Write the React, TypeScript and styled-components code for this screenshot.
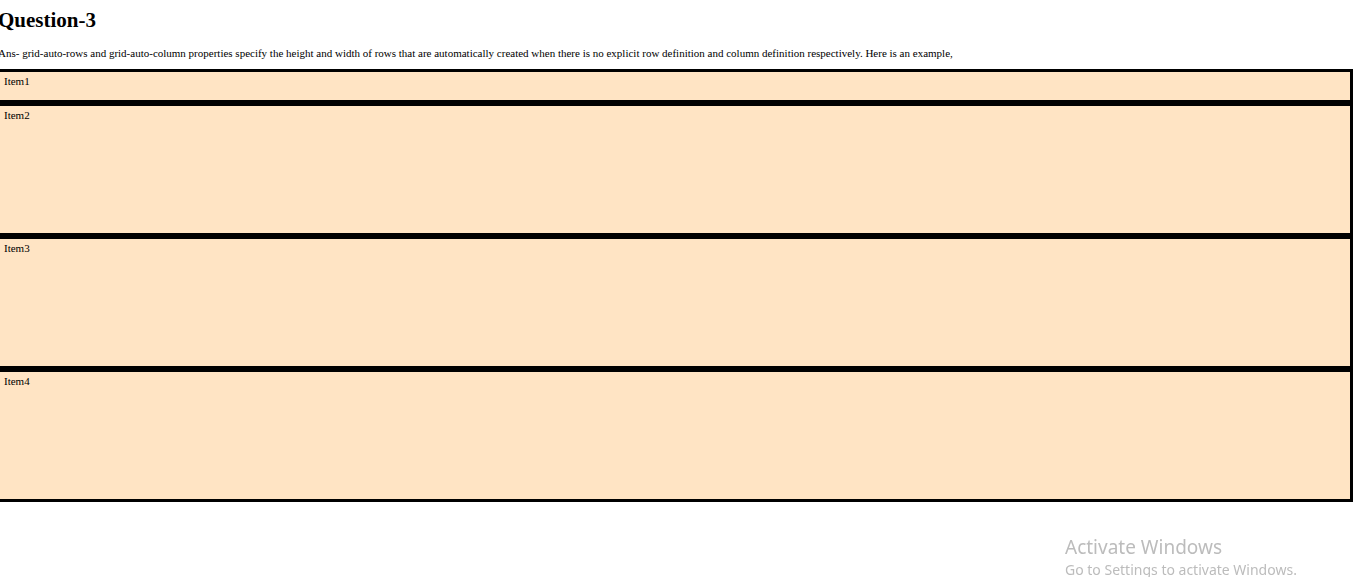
import React from "react";
import styled, { createGlobalStyle } from "styled-components";

const GlobalStyle = createGlobalStyle`
  body {
    margin: 0;
    background: #fff;
    color: #000;
    font-family: "Liberation Serif", "Times New Roman", serif;
    font-size: 11px;
    line-height: 12px;
    overflow: hidden;
  }
`;

const Page = styled.main`
  box-sizing: border-box;
  min-height: 100vh;
  margin-left: -2px;
  padding: 8px 5px 0 0;
`;

const Title = styled.h1`
  margin: 0 0 15px;
  font-size: 21px;
  line-height: 24px;
`;

const Answer = styled.p`
  margin: 0 0 10px;
`;

const Grid = styled.div`
  display: grid;
  grid-template-rows: 34px;
  grid-auto-rows: 133px;
`;

const Item = styled.div`
  padding: 3px 6px;
  border: 3px solid #000;
  border-left: 0;
  background: bisque;
`;

const Watermark = styled.aside`
  position: fixed;
  left: calc(100% - 293px);
  top: calc(100% - 43px);
  color: #bcbcbc;
  font-family: "Noto Sans", "Segoe UI", sans-serif;
  font-size: 14px;
  line-height: 20px;
  white-space: nowrap;
`;

const WatermarkTitle = styled.div`
  font-size: 19px;
  line-height: 26px;
`;

const items = ["Item1", "Item2", "Item3", "Item4"];

export default function App() {
  return (
    <>
      <GlobalStyle />
      <Page>
        <Title>Question-3</Title>
        <Answer>
          Ans- grid-auto-rows and grid-auto-column properties specify the height and width of rows
          that are automatically created when there is no explicit row definition and column
          definition respectively. Here is an example,
        </Answer>
        <Grid>
          {items.map((item) => (
            <Item key={item}>{item}</Item>
          ))}
        </Grid>
      </Page>
      <Watermark>
        <WatermarkTitle>Activate Windows</WatermarkTitle>
        <div>Go to Settings to activate Windows.</div>
      </Watermark>
    </>
  );
}
